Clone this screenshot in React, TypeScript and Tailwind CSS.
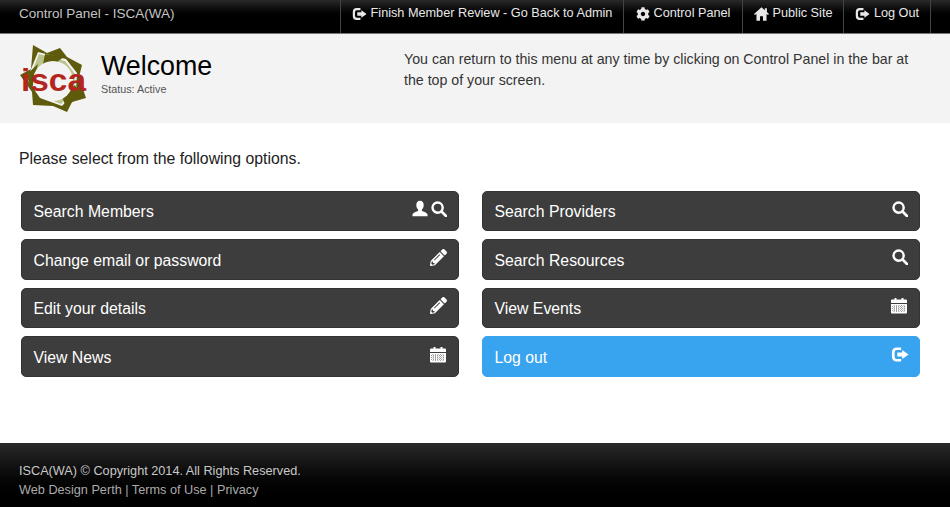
import React from 'react';
import { FaCog, FaPencilAlt } from 'react-icons/fa';

// glyphicon-style drawings, the packages have nothing close enough for these
const LogOutIcon = ({ className }: { className: string }) => (
  <svg viewBox="0 0 16 15" className={className} fill="currentColor">
    <path d="M9 1.2H5A4.2 4.2 0 0 0 .8 5.4v4.2A4.2 4.2 0 0 0 5 13.8h4v-2.3H5.2a2 2 0 0 1-2-2V5.500a2 2 0 0 1 2-2H9z" />
    <path d="M10 3.400 15.600 7.500 10 11.600V9.300H5.600V5.700H10z" />
  </svg>
);

const HomeIcon = ({ className }: { className: string }) => (
  <svg viewBox="0 0 16 15" className={className} fill="currentColor">
    <path d="M8 .3 11.600 3.500V1.400h2.200v4L16 7.400 15 8.600 13.400 7.400V14.700H9.600V10H6.400v4.700H2.600V7.400L1 8.600 0 7.400z" />
  </svg>
);

const UserIcon = ({ className }: { className: string }) => (
  <svg viewBox="0 0 16 16" className={className} fill="currentColor">
    <path d="M8 .3c2.400 0 3.700 1.800 3.700 4.100 0 1.900-.8 3.600-1.800 4.500v1.500c1.800.6 5.100 1.500 5.600 3.400v1.900H.5v-1.900c.5-1.900 3.800-2.800 5.600-3.400V8.900C5.100 8 4.300 6.300 4.300 4.400 4.300 2.100 5.600.3 8 .3z" />
  </svg>
);

const SearchIcon = ({ className }: { className: string }) => (
  <svg viewBox="0 0 16 16" className={className} fill="none" stroke="currentColor">
    <circle cx="6.600" cy="6.600" r="5.100" strokeWidth="2.400" />
    <path d="M10.500 10.500 15 15" strokeWidth="2.600" strokeLinecap="round" />
  </svg>
);

const CalendarIcon = ({ className }: { className: string }) => (
  <svg viewBox="0 0 16 16" className={className} fill="currentColor">
    <path d="M1 2h2.500V.5h2V2h5V.5h2V2H15a1 1 0 0 1 1 1v2.500H0V3a1 1 0 0 1 1-1z" />
    <path d="M0 6.500h16V15a1 1 0 0 1-1 1H1a1 1 0 0 1-1-1z" />
    <path d="M1 9h14M1 11h14M1 13h14M3 7.500v7.500M5.500 7.500v7.500M8 7.500v7.500M10.500 7.500v7.500M13 7.500v7.500" stroke="#3d3d3d" strokeWidth="0.500" strokeDasharray="1 1" fill="none" />
  </svg>
);

const navItems = [
  { label: 'Finish Member Review - Go Back to Admin', icon: <LogOutIcon className="w-[15px] h-[14px]" />, width: 'w-[283px]' },
  { label: 'Control Panel', icon: <FaCog className="w-[14px] h-[14px]" />, width: 'w-[119px]' },
  { label: 'Public Site', icon: <HomeIcon className="w-[15px] h-[14px]" />, width: 'w-[101px]' },
  { label: 'Log Out', icon: <LogOutIcon className="w-[15px] h-[14px]" />, width: 'w-[87px]' },
];

const searchIcon = <SearchIcon className="w-[16px] h-[16px]" />;
const pencilIcon = <FaPencilAlt className="w-[17px] h-[17px]" />;
const calendarIcon = <CalendarIcon className="w-[16px] h-[17px] mr-[1px]" />;

const options = [
  { label: 'Search Members', icon: <><UserIcon className="w-[16px] h-[17px]" />{searchIcon}</> },
  { label: 'Search Providers', icon: searchIcon },
  { label: 'Change email or password', icon: pencilIcon },
  { label: 'Search Resources', icon: searchIcon },
  { label: 'Edit your details', icon: pencilIcon },
  { label: 'View Events', icon: calendarIcon },
  { label: 'View News', icon: calendarIcon },
  { label: 'Log out', icon: <LogOutIcon className="w-[18px] h-[17px] -mr-[1px]" />, primary: true },
];

const Logo = () => (
  <svg viewBox="0 0 68 68" className="w-[68px] h-[68px] shrink-0">
    <polygon points="13,0 27,8 40,3 47,12 62,20 59,32 66,53 52,57 47,67 33,61 13,60 12,47 0,30 11,24" fill="#5e5c0c" />
    <polygon points="18,7 46,14 57,28 56,46 42,61 20,53 7,34" fill="#f3f3f3" />
    <polygon points="19,9 45,16 55,29 54,45 41,59 21,51 9,34" fill="#bcc48e" />
    <polygon points="25,9 44,12 37,17 23,19" fill="#5e5c0c" />
    <polygon points="6,30 18,19 15,31 12,44" fill="#5e5c0c" />
    <polygon points="42,52 55,40 60,51 46,62" fill="#5e5c0c" />
    <circle cx="33" cy="36" r="20" fill="#f3f3f3" />
    <text x="1" y="46" fontFamily="'Liberation Sans', sans-serif" fontWeight="700" fontSize="31" textLength="65" lengthAdjust="spacingAndGlyphs" fill="#b3261e">isca</text>
  </svg>
);

export default function App() {
  return (
    <div className="w-[950px] h-[507px] flex flex-col bg-white font-['Liberation_Sans',Arial,sans-serif] overflow-hidden">
      <nav className="h-[34px] shrink-0 flex justify-between pl-[19px] pr-[19px] bg-gradient-to-b from-[#2a2a2a] to-black to-60% border-b border-[#777]">
        <span className="text-[13.500px] leading-[27px] text-[#c4c4c4]">Control Panel - ISCA(WA)</span>
        <ul className="flex border-r border-[#444]">
          {navItems.map((item) => (
            <li key={item.label} className={`${item.width} flex items-center justify-center gap-[4px] pb-[6px] border-l border-[#444] text-[12.700px] text-[#e8e8e8] whitespace-nowrap`}>
              {item.icon}
              <span>{item.label}</span>
            </li>
          ))}
        </ul>
      </nav>

      <header className="h-[89px] shrink-0 flex bg-[#f3f3f3] pl-[20px] pt-[11px]">
        <Logo />
        <div className="w-[303px] ml-[13px] pt-[4px]">
          <h1 className="text-[26.800px] leading-[34px] text-black">Welcome</h1>
          <p className="mt-[1px] text-[10.800px] leading-[11px] text-[#555]">Status: Active</p>
        </div>
        <p className="w-[520px] pt-[4px] text-[14.200px] leading-[21px] text-[#333]">
          You can return to this menu at any time by clicking on Control Panel in the bar at the top of your screen.
        </p>
      </header>

      <main className="flex-1 pl-[19px] pt-[27px]">
        <p className="text-[15.800px] leading-[18px] text-[#222]">Please select from the following options.</p>
        <div className="grid grid-cols-[438px_438px] gap-x-[23px] gap-y-[8.200px] mt-[23px] ml-[2px]">
          {options.map((opt) => (
            <div
              key={opt.label}
              className={`h-[40.300px] flex items-center justify-between pl-[11.500px] pr-[11px] pt-[2px] rounded-[5px] border text-[15.800px] text-white ${
                opt.primary ? 'bg-[#38a3ee] border-[#38a3ee]' : 'bg-[#3d3d3d] border-[#333]'
              }`}
            >
              <span>{opt.label}</span>
              <span className="flex items-center gap-[3px] -mt-[7px]">{opt.icon}</span>
            </div>
          ))}
        </div>
      </main>

      <footer className="h-[64px] shrink-0 pl-[19px] pt-[19px] bg-gradient-to-b from-[#2a2a2a] to-black text-[12.700px] leading-[19px] text-[#c8c8c8]">
        <p>ISCA(WA) © Copyright 2014. All Rights Reserved.</p>
        <p className="text-[#aaa]">Web Design Perth | Terms of Use | Privacy</p>
      </footer>
    </div>
  );
}
